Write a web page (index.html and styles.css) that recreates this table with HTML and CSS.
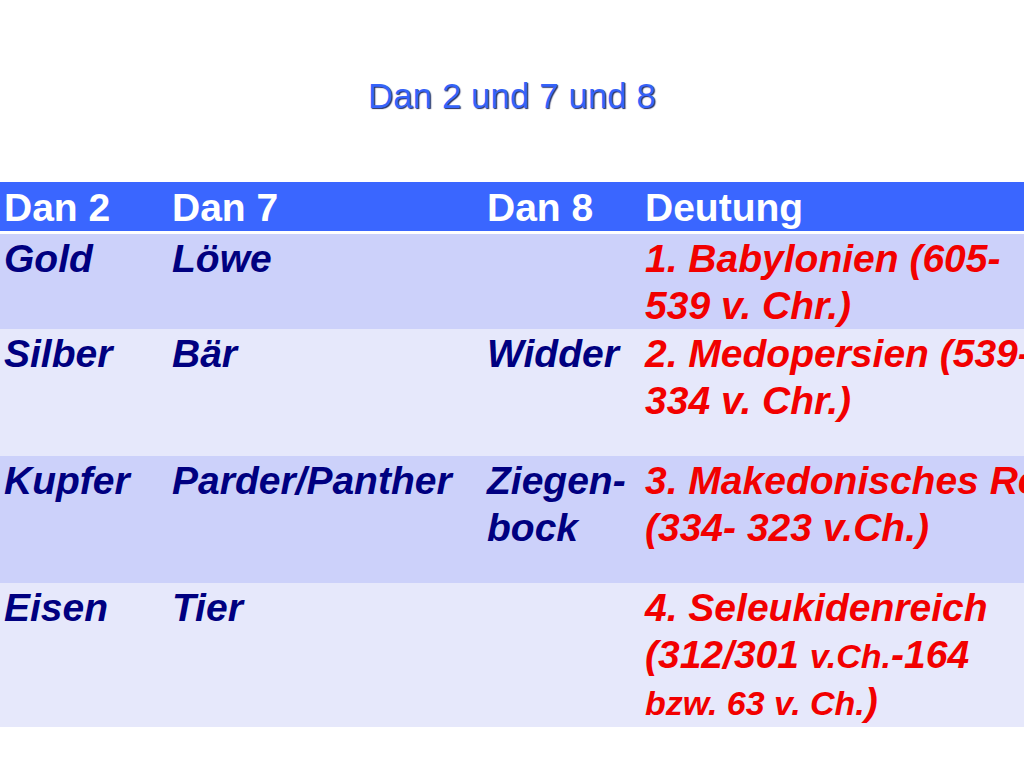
FILE: index.html
```html
<!DOCTYPE html>
<html lang="de">
<head>
<meta charset="utf-8">
<title>Dan 2 und 7 und 8</title>
<link rel="stylesheet" href="styles.css">
</head>
<body>
<div class="slide">
  <h1 class="title">Dan 2 und 7 und 8</h1>
  <table class="grid">
    <colgroup>
      <col class="c1"><col class="c2"><col class="c3"><col class="c4">
    </colgroup>
    <thead>
      <tr class="head">
        <th>Dan 2</th><th>Dan 7</th><th>Dan 8</th><th>Deutung</th>
      </tr>
    </thead>
    <tbody>
      <tr class="row r1 dark">
        <td>Gold</td><td>Löwe</td><td></td>
        <td class="red">1. Babylonien (605-<br>539 v. Chr.)</td>
      </tr>
      <tr class="row r2 light">
        <td>Silber</td><td>Bär</td><td>Widder</td>
        <td class="red">2. Medopersien (539-<br>334 v. Chr.)</td>
      </tr>
      <tr class="row r3 dark">
        <td>Kupfer</td><td>Parder/Panther</td><td>Ziegen-<br>bock</td>
        <td class="red">3. Makedonisches Reich<br>(334- 323 v.Ch.)</td>
      </tr>
      <tr class="row r4 light">
        <td>Eisen</td><td>Tier</td><td></td>
        <td class="red">4. Seleukidenreich<br>(312/301 <span class="small">v.Ch.</span>-164<br><span class="small">bzw. 63 v. Ch.</span>)</td>
      </tr>
    </tbody>
  </table>
</div>
</body>
</html>
```

FILE: styles.css
```css
html, body {
  margin: 0;
  padding: 0;
  background: #ffffff;
}

body {
  width: 1024px;
  height: 768px;
  overflow: hidden;
  font-family: "Liberation Sans", Arial, sans-serif;
}

.slide {
  padding-top: 76px;
}

.title {
  margin: 0 0 66px 0;
  height: 40px;
  line-height: 40px;
  font-size: 35px;
  font-weight: normal;
  text-align: center;
  color: #3563fa;
  text-shadow: 1px 1px 1px rgba(10, 20, 80, 0.9);
}

.grid {
  border-collapse: collapse;
  table-layout: fixed;
  width: 1080px;
  font-size: 39px;
  line-height: 47px;
}

.c1 { width: 168px; }
.c2 { width: 315px; }
.c3 { width: 158px; }
.c4 { width: 439px; }

.grid th,
.grid td {
  padding: 1px 4px 0 4px;
  vertical-align: top;
  text-align: left;
  white-space: nowrap;
}

.head {
  background: #3a66ff;
  color: #ffffff;
  font-weight: bold;
  height: 48px;
  border-bottom: 3px solid #ffffff;
}

.head th {
  padding-top: 2px;
}

.row td {
  font-weight: bold;
  font-style: italic;
  color: #000080;
}

.row td.red {
  color: #f20000;
}

.dark { background: #ccd1fa; }
.light { background: #e6e8fb; }

.r1 { height: 94px; }
.r2 { height: 127px; }
.r3 { height: 127px; }
.r4 { height: 144px; }

.small {
  font-size: 34px;
  line-height: 1;
}
```
